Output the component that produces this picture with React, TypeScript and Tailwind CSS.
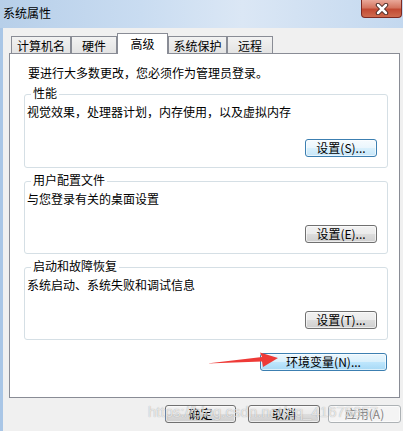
const groups = [
  { title: '性能', desc: '视觉效果，处理器计划，内存使用，以及虚拟内存', btn: '设置(S)...', focused: true },
  { title: '用户配置文件', desc: '与您登录有关的桌面设置', btn: '设置(E)...', focused: false },
  { title: '启动和故障恢复', desc: '系统启动、系统失败和调试信息', btn: '设置(T)...', focused: false },
]

const tabs = [
  { label: '计算机名', w: 'w-[60px]' },
  { label: '硬件', w: 'w-[46px]' },
  { label: '高级', w: 'w-[51px]', active: true },
  { label: '系统保护', w: 'w-[59px]' },
  { label: '远程', w: 'w-[46px]' },
]

function Btn({
  children,
  variant = 'normal',
  className = '',
}: {
  children: React.ReactNode
  variant?: 'normal' | 'focused' | 'hover' | 'disabled'
  className?: string
}) {
  const styles = {
    normal:
      'border-[#707070] bg-[linear-gradient(#f2f2f2_0%,#ebebeb_50%,#dddddd_51%,#cfcfcf_100%)] text-black',
    focused:
      'border-[#3c7fb1] bg-[linear-gradient(#f6fbfe_0%,#eaf6fd_50%,#d9f0fc_51%,#c6e6f9_100%)] text-black',
    hover:
      'border-[#3c7fb1] bg-[linear-gradient(#eaf6fd_0%,#d9f0fc_50%,#bee6fd_51%,#a7d9f5_100%)] text-black',
    disabled: 'border-[#adb2b5] bg-[#f4f4f4] text-[#838383]',
  }
  return (
    <div
      className={`flex h-[18px] items-center justify-center rounded-[3px] border text-[12px] leading-[16px] shadow-[inset_0_0_0_1px_rgba(255,255,255,0.6)] ${styles[variant]} ${className}`}
    >
      {children}
    </div>
  )
}

export default function App() {
  return (
    <div className="relative flex h-[431px] w-[403px] flex-col overflow-hidden bg-[#f0f0f0] font-['Noto_Sans_CJK_SC','Liberation_Sans',sans-serif] text-black">
      {/* title bar */}
      <div className="flex h-[28px] items-start bg-[linear-gradient(90deg,#b7cfe9_0%,#c9dcf1_35%,#dbe7f5_60%,#c3d8ef_100%)]">
        <div className="pl-[3px] pt-[5px] text-[12px] leading-[16px]">系统属性</div>
        <div className="ml-auto mr-[1px] flex h-[18px] w-[41px] items-center justify-center rounded-b-[4px] border border-t-0 border-[#7d2a22] bg-[linear-gradient(#e9a899_0%,#d47560_45%,#c24a33_55%,#cf6b4e_100%)]">
          <svg width="14" height="12" viewBox="0 0 14 12">
            <path d="M3 2 L11 10 M11 2 L3 10" stroke="#4a2a25" strokeWidth="4.5" strokeLinecap="round" />
            <path d="M3 2 L11 10 M11 2 L3 10" stroke="#ffffff" strokeWidth="2.5" strokeLinecap="round" />
          </svg>
        </div>
      </div>

      {/* body */}
      <div className="flex flex-1 flex-col border-l-[3px] border-[#a9c6e6]">
        {/* tabs */}
        <div className="relative z-10 ml-[8px] mt-[5px] flex h-[20px] items-end">
          {tabs.map((t) =>
            t.active ? (
              <div
                key={t.label}
                className={`${t.w} -mb-px flex h-[21px] items-start justify-center border border-b-0 border-[#898c95] bg-white pt-[2px] text-[12px] leading-[16px]`}
              >
                {t.label}
              </div>
            ) : (
              <div
                key={t.label}
                className={`${t.w} flex h-[17px] items-start justify-center border border-b-0 border-[#898c95] bg-[linear-gradient(#f2f2f2,#e3e3e3)] pt-[1px] text-[12px] leading-[16px]`}
              >
                {t.label}
              </div>
            )
          )}
        </div>

        {/* panel */}
        <div className="ml-[6px] flex h-[345px] w-[391px] flex-col border border-[#898c95] bg-white">
          <div className="pl-[18px] pt-[11px] text-[12px] leading-[16px]">
            要进行大多数更改，您必须作为管理员登录。
          </div>

          <div className="ml-[14px] flex w-[364px] flex-col">
            {groups.map((g, i) => (
              <div
                key={g.title}
                className={`flex ${i === 0 ? 'mt-[13px] h-[74px]' : 'mt-[13px] h-[73px]'} flex-col rounded-[3px] border border-[#d5dfe5]`}
              >
                <div className="-mt-[10px] ml-[6px] w-fit bg-white px-[2px] text-[12px] leading-[16px]">
                  {g.title}
                </div>
                <div className="mt-[3px] pl-[2px] text-[12px] leading-[16px]">{g.desc}</div>
                <Btn
                  variant={g.focused ? 'focused' : 'normal'}
                  className="mb-[10px] mr-[10px] mt-auto w-[72px] self-end"
                >
                  {g.btn}
                </Btn>
              </div>
            ))}
            <Btn variant="hover" className="mr-[1px] mt-[13px] w-[127px] self-end">
              环境变量(N)...
            </Btn>
          </div>
        </div>

        {/* dialog buttons */}
        <div className="mt-[7px] flex">
          <Btn className="ml-[162px] w-[71px]">确定</Btn>
          <Btn className="ml-[12px] w-[72px]">取消</Btn>
          <Btn variant="disabled" className="ml-[8px] w-[73px]">
            应用(A)
          </Btn>
        </div>
      </div>

      {/* red annotation arrow */}
      <svg className="absolute left-0 top-0" width="403" height="431" viewBox="0 0 403 431">
        <polygon
          points="207,363.5 262,357 260,352.5 278,358 263,367 262,361.5"
          fill="#ee3a37"
        />
      </svg>

      {/* watermark */}
      <div className="absolute left-[148px] top-[402px] font-['Liberation_Sans',sans-serif] text-[15px] leading-[20px] text-white/70 [text-shadow:0_0_1px_rgba(0,0,0,0.35)]">
        https://blog.csdn.net/qq_41675857
      </div>
    </div>
  )
}
